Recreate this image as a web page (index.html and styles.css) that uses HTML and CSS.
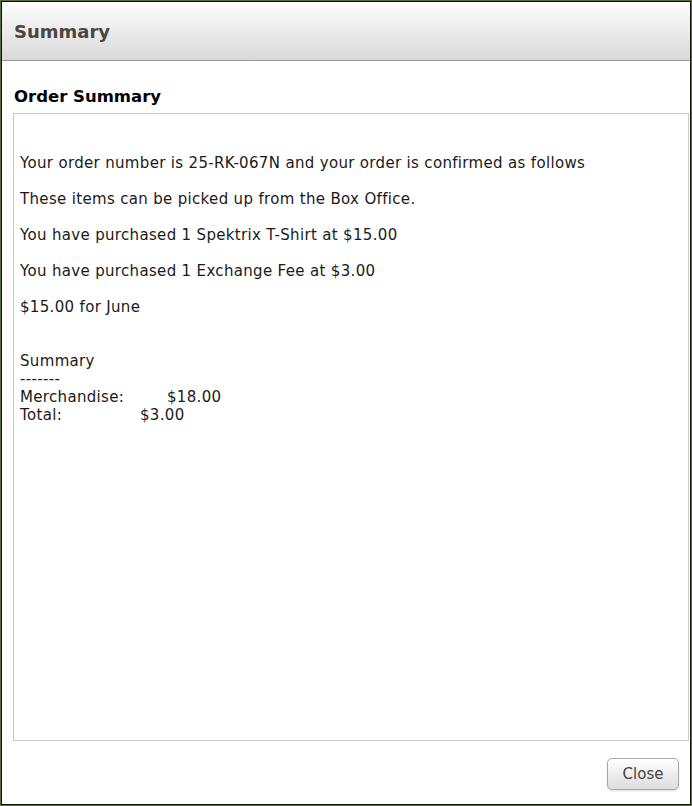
FILE: index.html
```html
<!DOCTYPE html>
<html lang="en">
<head>
    <meta charset="UTF-8">
    <title>Summary</title>
    <link rel="stylesheet" href="styles.css">
</head>
<body>
    <div class="dialog">
        <div class="dialog-header">
            <h2>Summary</h2>
        </div>
        <div class="dialog-body">
            <h3>Order Summary</h3>
            <div class="summary-box">
                <p>Your order number is 25-RK-067N and your order is confirmed as follows</p>
                <p>These items can be picked up from the Box Office.</p>
                <p>You have purchased 1 Spektrix T-Shirt at $15.00</p>
                <p>You have purchased 1 Exchange Fee at $3.00</p>
                <p>$15.00 for June</p>
                <div class="totals">
                    <div>Summary</div>
                    <div>-------</div>
                    <div><span class="merch-label">Merchandise:</span>$18.00</div>
                    <div><span class="total-label">Total:</span>$3.00</div>
                </div>
            </div>
        </div>
        <div class="dialog-footer">
            <button class="close-button">Close</button>
        </div>
    </div>
</body>
</html>
```

FILE: styles.css
```css
body {
    margin: 0;
    padding: 1px;
    background: #5a6b3a;
    font-family: "DejaVu Sans", Verdana, sans-serif;
}
.dialog {
    width: 688px;
    height: 802px;
    border: 1px solid #111;
    background: #fff;
    display: flex;
    flex-direction: column;
}
.dialog-header {
    flex-shrink: 0;
    height: 58px;
    border-bottom: 1px solid #999;
    background: linear-gradient(to bottom, #fdfdfd, #d9d9d9);
    display: flex;
    align-items: center;
    padding-left: 12px;
}
.dialog-header h2 {
    margin: 0;
    font-size: 18px;
    font-weight: bold;
    color: #4a4540;
}
.dialog-body {
    flex: 1;
    display: flex;
    flex-direction: column;
    padding: 0 1px 0 11px;
}
.dialog-body h3 {
    margin: 25px 0 0 1px;
    font-size: 16.5px;
    line-height: 22px;
    color: #000;
}
.summary-box {
    box-sizing: border-box;
    height: 628px;
    margin-top: 5px;
    border: 1px solid #c8c8c8;
    padding: 40px 6px 0;
    font-size: 15px;
    letter-spacing: 0.33px;
    line-height: 18px;
    color: #1a1a1a;
}
.summary-box p {
    margin: 0 0 18px;
}
.totals {
    margin-top: 36px;
}
.merch-label {
    display: inline-block;
    width: 147px;
}
.total-label {
    display: inline-block;
    width: 120px;
}
.dialog-footer {
    display: flex;
    justify-content: flex-end;
    padding: 0 11px 14px 0;
}
.close-button {
    width: 72px;
    height: 32px;
    border: 1px solid #a8a8a8;
    border-radius: 5px;
    background: linear-gradient(to bottom, #ffffff, #dcdcdc);
    box-shadow: 0 1px 2px rgba(0, 0, 0, 0.15);
    font-family: "DejaVu Sans", Verdana, sans-serif;
    font-size: 15px;
    color: #444;
}
```
